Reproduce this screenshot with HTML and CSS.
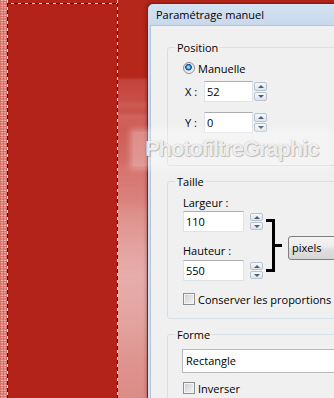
FILE: index.html
```html
<!DOCTYPE html>
<html lang="fr">
<head>
    <meta charset="UTF-8">
    <meta name="viewport" content="width=device-width, initial-scale=1.0">
    <title>Paramétrage manuel</title>
    <link rel="stylesheet" href="styles.css">
</head>
<body>
    <div class="screen">
        <div class="canvas">
            <div class="edge-left"></div>
            <div class="selection"></div>
            <div class="edge-right"></div>
        </div>

        <div class="dialog">
            <div class="titlebar">Paramétrage manuel</div>
            <div class="client">
                <fieldset class="group group-position">
                    <legend>Position</legend>
                    <div class="option-row first">
                        <span class="radio"></span>
                        <span>Manuelle</span>
                    </div>
                    <div class="coord-row">
                        <span class="coord-label">X :</span>
                        <span class="field field-coord">52</span>
                        <span class="spin"><span class="spin-btn up"></span><span class="spin-btn down"></span></span>
                    </div>
                    <div class="coord-row second">
                        <span class="coord-label">Y :</span>
                        <span class="field field-coord">0</span>
                        <span class="spin"><span class="spin-btn up"></span><span class="spin-btn down"></span></span>
                    </div>
                </fieldset>

                <fieldset class="group group-size">
                    <legend>Taille</legend>
                    <div class="size-row">
                        <div class="size-fields">
                            <div class="field-label">Largeur :</div>
                            <div class="size-field-row">
                                <span class="field field-size">110</span>
                                <span class="spin"><span class="spin-btn up"></span><span class="spin-btn down"></span></span>
                            </div>
                            <div class="field-label second">Hauteur :</div>
                            <div class="size-field-row last">
                                <span class="field field-size">550</span>
                                <span class="spin"><span class="spin-btn up"></span><span class="spin-btn down"></span></span>
                            </div>
                        </div>
                        <div class="bracket">
                            <span class="bracket-line"></span>
                            <span class="bracket-tick"></span>
                        </div>
                        <div class="unit-select">pixels</div>
                    </div>
                    <div class="option-row keep">
                        <span class="check"></span>
                        <span>Conserver les proportions</span>
                    </div>
                </fieldset>

                <fieldset class="group group-shape">
                    <legend>Forme</legend>
                    <div class="combo">Rectangle</div>
                    <div class="option-row invert">
                        <span class="check"></span>
                        <span>Inverser</span>
                    </div>
                </fieldset>
            </div>
        </div>

        <div class="watermark">PhotofiltreGraphic</div>
    </div>
</body>
</html>
```

FILE: styles.css
```css
* {
    margin: 0;
    padding: 0;
    box-sizing: border-box;
}
body {
    font-family: "Open Sans", "Noto Sans", sans-serif;
    font-size: 11px;
    color: #000;
    background-color: #b3241a;
}
.screen {
    position: relative;
    display: flex;
    align-items: flex-start;
    width: 334px;
    height: 398px;
    overflow: hidden;
}

/* image behind the dialog */
.canvas {
    display: flex;
    flex: none;
    width: 147px;
    height: 398px;
}
.edge-left {
    width: 7px;
    background:
        repeating-linear-gradient(90deg, rgba(190, 60, 50, 0.35) 0 1px, transparent 1px 3px),
        repeating-linear-gradient(0deg, #e6a098 0 1px, #d8786f 1px 2px, #eab0a9 2px 3px, #dc857d 3px 5px);
}
.selection {
    width: 111px;
    background:
        repeating-linear-gradient(180deg, #f4ddd6 0 3px, #3a1812 3px 7px) left top / 1px 100% no-repeat,
        repeating-linear-gradient(180deg, #f4ddd6 0 3px, #3a1812 3px 7px) right top / 1px 100% no-repeat,
        repeating-linear-gradient(90deg, #3a1812 0 4px, #f4ddd6 4px 7px) left 3px / 100% 1px no-repeat,
        #b3231a;
}
.edge-right {
    flex: 1;
    background: linear-gradient(180deg,
        #b5261b 0, #b5261b 77px, #c3433b 80px, #c84d46 100px, #cd5a53 104px,
        #c8524b 112px, #d0635d 116px, #cd5d56 130px, #d26a64 160px, #d6746e 168px,
        #d9817c 200px, #de918c 215px, #e3a4a1 250px, #e6adaa 275px, #e3a4a0 320px,
        #de948f 360px, #db8b86 398px);
}

/* dialog window */
.dialog {
    flex: none;
    display: flex;
    flex-direction: column;
    width: 240px;
    height: 395px;
    margin-top: 3px;
    padding-left: 2px;
    border-top: 1px solid #3b3b3b;
    border-left: 1px solid #3b3b3b;
    border-radius: 6px 0 0 0;
    background: linear-gradient(#d4e2f2, #c8d9ec 22px, #d3e0ef);
    box-shadow: -1px 0 3px rgba(70, 0, 0, 0.3);
}
.titlebar {
    height: 21px;
    line-height: 21px;
    padding-left: 6px;
    white-space: nowrap;
}
.client {
    flex: 1;
    padding: 14px 0 0 16px;
    background-color: #f0f0f0;
    border-top: 1px solid #b4c4d8;
    border-left: 1px solid #b4c4d8;
}

/* group boxes */
.group {
    border: 1px solid #d5dfe5;
    border-radius: 3px;
    padding: 0 0 0 15px;
}
.group legend {
    padding: 0 2px;
    margin-left: -8px;
    line-height: 15px;
}
.group-position {
    padding-bottom: 32px;
}
.group-size {
    margin-top: 8px;
    padding-bottom: 11px;
}
.group-shape {
    margin-top: 8px;
    padding-bottom: 20px;
}

.option-row {
    display: flex;
    align-items: center;
    gap: 3px;
    height: 16px;
    white-space: nowrap;
}
.option-row.first {
    margin-top: 5px;
}
.option-row.keep {
    margin-top: 10px;
}
.option-row.invert {
    margin-top: 7px;
}

.radio {
    flex: none;
    width: 12px;
    height: 12px;
    border: 1px solid #8b8e93;
    border-radius: 50%;
    background: radial-gradient(circle at 45% 42%, #9ad6ff 0 1px, #2c82cb 2px, #0f4a8a 3px, #dfe3e8 3.6px, #f7f8f9 6px);
}
.check {
    flex: none;
    width: 12px;
    height: 12px;
    border: 1px solid #8e8f8f;
    background: linear-gradient(135deg, #c9cdd3, #f6f6f6);
    box-shadow: inset 0 0 0 1px #f4f4f4;
}

/* text boxes */
.field {
    display: block;
    height: 21px;
    line-height: 19px;
    padding-left: 2px;
    background-color: #fff;
    border: 1px solid #dfe3e8;
    border-top-color: #abadb3;
}
.coord-row {
    display: flex;
    align-items: center;
    height: 21px;
    margin-top: 5px;
}
.coord-row.second {
    margin-top: 10px;
}
.coord-label {
    width: 21px;
    padding-left: 2px;
}
.field-coord {
    width: 49px;
    margin-right: 1px;
}

.spin {
    display: flex;
    flex-direction: column;
    gap: 1px;
    width: 13px;
}
.spin-btn {
    display: flex;
    align-items: center;
    justify-content: center;
    height: 9px;
    border: 1px solid #b9c3ce;
    border-radius: 2px;
    background: linear-gradient(#f7f8fa, #dde3ea);
}
.spin-btn::after {
    content: "";
    border-left: 3px solid transparent;
    border-right: 3px solid transparent;
}
.spin-btn.up::after {
    border-bottom: 3px solid #4c607a;
}
.spin-btn.down::after {
    border-top: 3px solid #4c607a;
}

/* size block */
.size-row {
    display: flex;
    margin-top: 6px;
}
.size-fields {
    width: 80px;
}
.field-label {
    height: 15px;
    line-height: 15px;
    white-space: nowrap;
}
.field-label.second {
    margin-top: 11px;
}
.size-field-row {
    display: flex;
    align-items: center;
    height: 21px;
    margin-top: 1px;
}
.size-field-row.last {
    margin-top: 2px;
}
.field-size {
    width: 61px;
    margin-right: 6px;
}
.size-field-row .spin-btn {
    height: 8px;
}

.bracket {
    display: flex;
    align-items: center;
    flex: none;
    height: 53px;
    margin: 24px 0 0 3px;
}
.bracket-line {
    width: 9px;
    height: 53px;
    border: 3px solid #000;
    border-left: none;
}
.bracket-tick {
    width: 7px;
    height: 3px;
    background-color: #000;
}
.unit-select {
    flex: none;
    width: 80px;
    height: 24px;
    margin: 41px 0 0 6px;
    padding-left: 3px;
    line-height: 22px;
    border: 1px solid #7e7e7e;
    border-radius: 3px;
    background: linear-gradient(#f3f3f3 0, #ececec 45%, #dfdfdf 55%, #d6d6d6 100%);
}

.combo {
    height: 24px;
    margin: 7px 0 0 -1px;
    padding-left: 3px;
    line-height: 22px;
    background-color: #fff;
    border: 1px solid #b7bac0;
}

/* watermark over the screenshot */
.watermark {
    position: absolute;
    left: 133px;
    top: 132px;
    width: 197px;
    height: 34px;
    padding-left: 12px;
    line-height: 34px;
    font-family: "Liberation Sans", Arial, sans-serif;
    font-weight: bold;
    font-size: 22px;
    letter-spacing: -1.1px;
    white-space: nowrap;
    color: rgba(255, 255, 255, 0.85);
    text-shadow: 0 0 1px rgba(0, 0, 0, 0.3), 1px 1px 1px rgba(0, 0, 0, 0.2);
    background-color: rgba(255, 255, 255, 0.3);
    box-shadow: 0 0 6px 3px rgba(255, 255, 255, 0.3);
}
```
